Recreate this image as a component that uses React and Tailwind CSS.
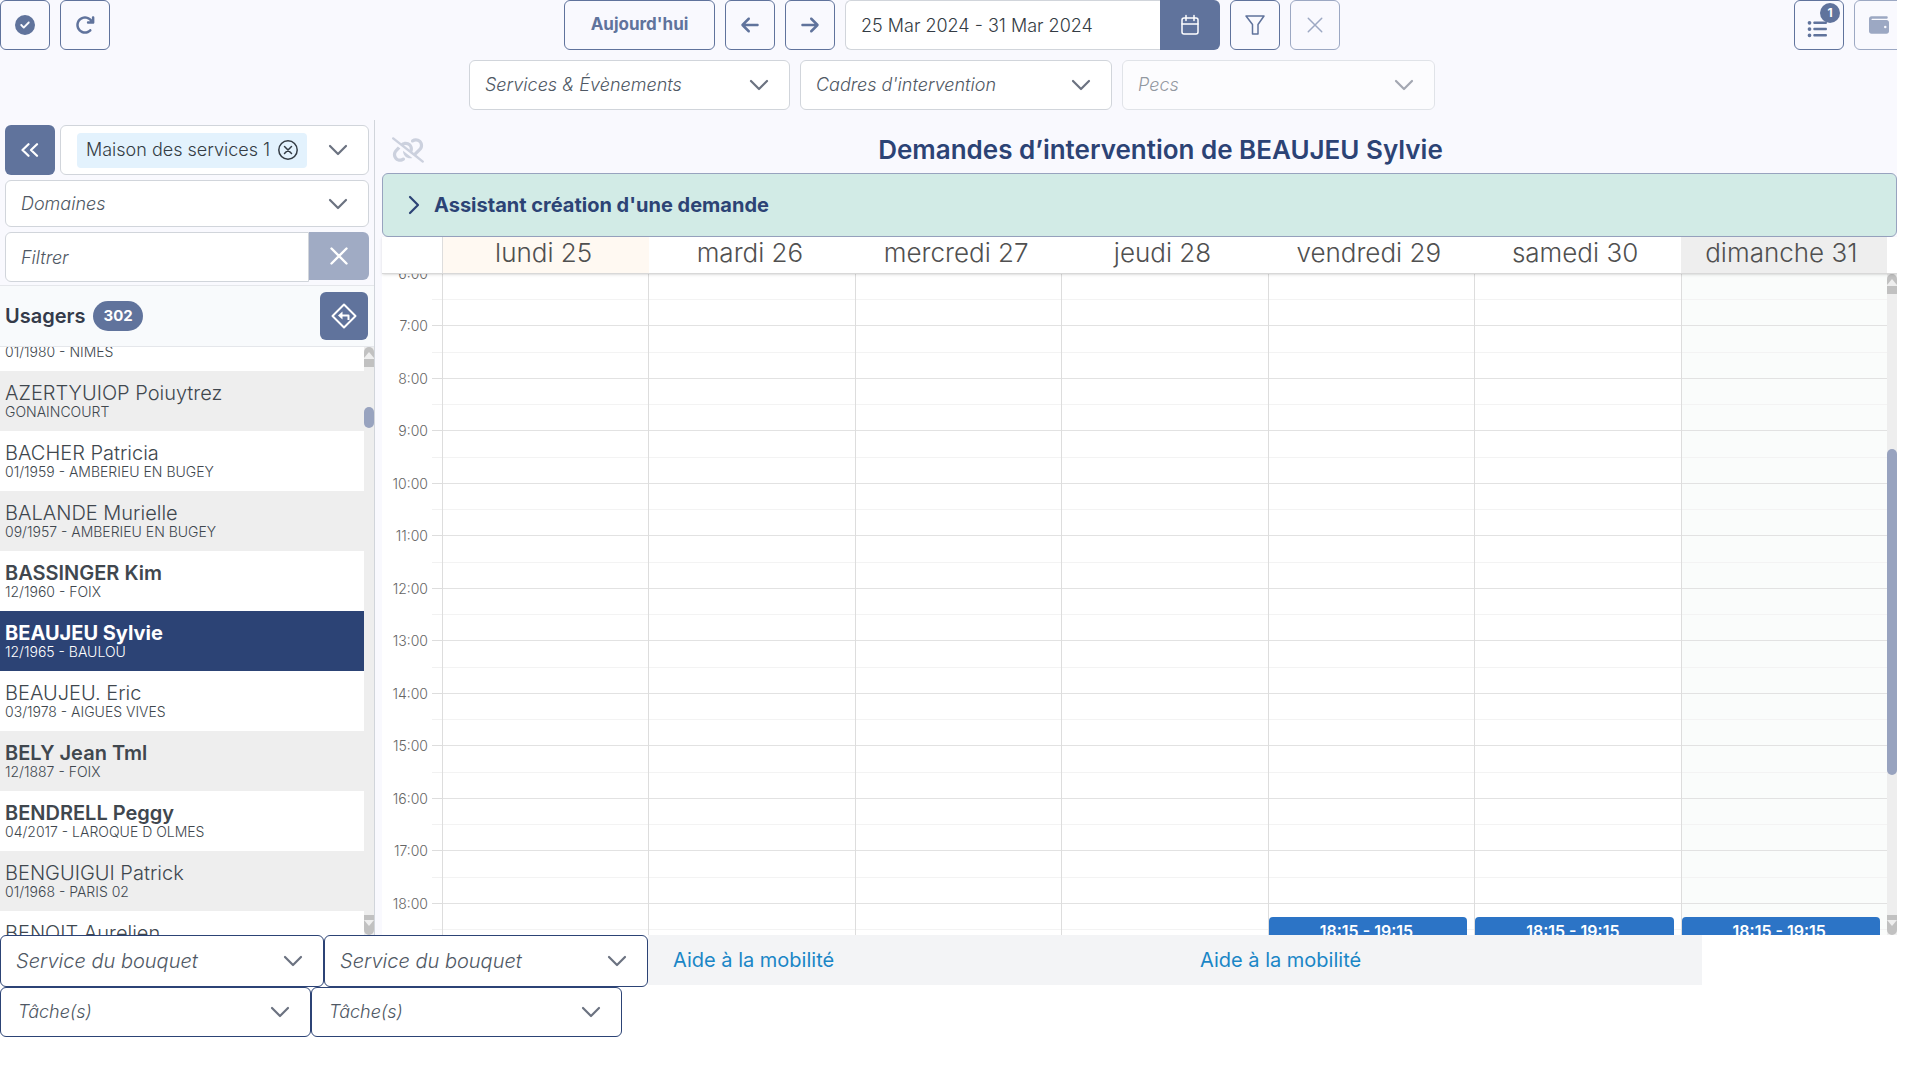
import React from "react";
import {
  FaCircleCheck,
  FaArrowRotateRight,
  FaArrowLeft,
  FaArrowRight,
  FaLinkSlash,
  FaListUl,
  FaWallet,
} from "react-icons/fa6";

const users = [
  { name: "", info: "01/1980 - NIMES" },
  { name: "AZERTYUIOP Poiuytrez", info: "GONAINCOURT" },
  { name: "BACHER Patricia", info: "01/1959 - AMBERIEU EN BUGEY" },
  { name: "BALANDE Murielle", info: "09/1957 - AMBERIEU EN BUGEY" },
  { name: "BASSINGER Kim", info: "12/1960 - FOIX", bold: true },
  { name: "BEAUJEU Sylvie", info: "12/1965 - BAULOU", bold: true, selected: true },
  { name: "BEAUJEU. Eric", info: "03/1978 - AIGUES VIVES" },
  { name: "BELY Jean Tml", info: "12/1887 - FOIX", bold: true },
  { name: "BENDRELL Peggy", info: "04/2017 - LAROQUE D OLMES", bold: true },
  { name: "BENGUIGUI Patrick", info: "01/1968 - PARIS 02" },
  { name: "BENOIT Aurelien", info: "" },
];

const days = [
  { label: "lundi 25", head: "bg-[#fff9f2]" },
  { label: "mardi 26" },
  { label: "mercredi 27" },
  { label: "jeudi 28" },
  { label: "vendredi 29", event: true },
  { label: "samedi 30", event: true },
  { label: "dimanche 31", head: "bg-[#eeeeee]", body: "bg-[#fafcfb]", event: true },
];

const hours = [6, 7, 8, 9, 10, 11, 12, 13, 14, 15, 16, 17, 18];

function Chevron({ className = "" }) {
  return (
    <svg viewBox="0 0 20 20" className={`size-5 ${className}`} fill="none" stroke="currentColor" strokeWidth="2.2" strokeLinecap="round" strokeLinejoin="round">
      <path d="M2 6l8 8 8-8" />
    </svg>
  );
}

function Cross({ className = "", strokeWidth = 1.6 }) {
  return (
    <svg viewBox="0 0 20 20" className={className} fill="none" stroke="currentColor" strokeWidth={strokeWidth} strokeLinecap="round">
      <path d="M2.500 2.500l15 15M17.500 2.500l-15 15" />
    </svg>
  );
}

function IconButton({ label, className = "", children, ...rest }) {
  return (
    <button
      type="button"
      aria-label={label}
      className={`relative flex size-[50px] shrink-0 items-center justify-center rounded-md border border-[#60739c] text-[#60739c] ${className}`}
      {...rest}
    >
      {children}
    </button>
  );
}

function Dropdown({ label, className = "", selectClass = "border-[#d1d5db] px-[15px] text-lg font-light", disabled }) {
  return (
    <div className={`relative flex items-center ${disabled ? "opacity-60" : ""} ${className}`}>
      <select
        aria-label={label}
        disabled={disabled}
        className={`size-full appearance-none rounded-md border bg-white text-[#4f5864] italic ${selectClass}`}
      >
        <option>{label}</option>
      </select>
      <Chevron className="pointer-events-none absolute right-[21px] text-[#6b7280]" />
    </div>
  );
}

function ScrollBar({ thumb }) {
  return (
    <div aria-hidden="true" className="flex w-[10px] shrink-0 flex-col bg-[#eeeeee]">
      <svg viewBox="0 0 10 20" className="h-5 w-[10px] shrink-0">
        <path d="M0 11V5a5 5 0 0 1 10 0v6z" fill="#c1c1c1" />
        <path d="M0 11l5-6 5 6z" fill="#eeeeee" />
        <path d="M0 12h10v8H0z" fill="#c1c1c1" />
      </svg>
      {thumb}
      <svg viewBox="0 0 10 20" className="mt-auto h-5 w-[10px] shrink-0">
        <path d="M0 0h10v5H0z" fill="#c1c1c1" />
        <path d="M0 5v10a5 5 0 0 0 10 0V5z" fill="#c1c1c1" />
        <path d="M0 5l5 6 5-6z" fill="#eeeeee" />
      </svg>
    </div>
  );
}

function Toolbar() {
  return (
    <header className="-mr-[7px] flex flex-col gap-[10px]">
      <div className="flex justify-between">
        <div className="flex gap-[10px]">
          <IconButton label="Valider"><FaCircleCheck className="size-5" /></IconButton>
          <IconButton label="Actualiser"><FaArrowRotateRight className="size-5" /></IconButton>
        </div>
        <div className="flex gap-[10px]">
          <button type="button" className="h-[50px] w-[151px] rounded-md border border-[#60739c] text-[17px] font-bold text-[#60739c]">
            Aujourd'hui
          </button>
          <IconButton label="Semaine précédente"><FaArrowLeft className="size-5" /></IconButton>
          <IconButton label="Semaine suivante"><FaArrowRight className="size-5" /></IconButton>
          <div className="flex">
            <input
              aria-label="Période"
              defaultValue="25 Mar 2024 - 31 Mar 2024"
              className="h-[50px] w-[315px] rounded-l-md border border-r-0 border-[#d1d5db] bg-white px-[15px] text-lg font-light text-[#343c44]"
            />
            <button type="button" aria-label="Ouvrir le calendrier" className="flex h-[50px] w-[60px] items-center justify-center rounded-r-md bg-[#60739c] text-white">
              <svg viewBox="0 0 20 22" className="h-[22px] w-5" fill="none" stroke="currentColor" strokeWidth="1.500" strokeLinecap="round">
                <rect x="2" y="4" width="16" height="16" rx="2" />
                <path d="M2 10h16M6 1.500v5M14 1.500v5" />
              </svg>
            </button>
          </div>
          <IconButton label="Filtrer">
            <svg viewBox="0 0 20 20" className="size-5" fill="none" stroke="currentColor" strokeWidth="1.500" strokeLinejoin="round">
              <path d="M1 1h18l-6 8.500V19H7.500V9.500z" />
            </svg>
          </IconButton>
          <IconButton label="Effacer les filtres" className="opacity-60" disabled><Cross className="size-[18px]" /></IconButton>
        </div>
        <div className="flex gap-[10px]">
          <IconButton label="Liste">
            <FaListUl className="mt-2 mr-1 size-5" />
            <span className="absolute top-[2px] right-[3px] flex size-5 items-center justify-center rounded-full bg-[#60739c] text-xs font-bold text-white">1</span>
          </IconButton>
          <IconButton label="Portefeuille" className="opacity-60" disabled><FaWallet className="size-5" /></IconButton>
        </div>
      </div>
      <div className="flex justify-center gap-[10px]">
        <Dropdown label="Services &amp; Évènements" className="h-[50px] w-[321px]" />
        <Dropdown label="Cadres d'intervention" className="h-[50px] w-[312px]" />
        <Dropdown label="Pecs" className="h-[50px] w-[313px]" disabled />
      </div>
    </header>
  );
}

function Sidebar() {
  return (
    <aside className="flex w-[375px] shrink-0 flex-col border-r border-[#d1d5db]">
      <div className="flex flex-col gap-[5px] p-[5px] pb-[3px]">
        <div className="flex gap-[5px]">
          <button type="button" aria-label="Replier le panneau" className="flex size-[50px] shrink-0 items-center justify-center rounded-md bg-[#60739c] text-white">
            <svg viewBox="0 0 18 14" className="h-[14px] w-[18px]" fill="none" stroke="currentColor" strokeWidth="2.200" strokeLinecap="round" strokeLinejoin="round">
              <path d="M7.500 1.200L1.500 7l6 5.800M16 1.200L10 7l6 5.800" />
            </svg>
          </button>
          <div className="flex h-[50px] flex-1 items-center justify-between rounded-md border border-[#d1d5db] bg-white pr-5 pl-4">
            <span className="flex h-[35px] items-center gap-2 rounded-sm bg-[#e3f2fd] px-[9px] text-lg font-light text-[#343c44]">
              Maison des services 1
              <button type="button" aria-label="Retirer Maison des services 1">
                <svg viewBox="0 0 20 20" className="size-5" fill="none" stroke="currentColor" strokeWidth="1.500" strokeLinecap="round">
                  <circle cx="10" cy="10" r="9.200" />
                  <path d="M6.500 6.500l7 7M13.500 6.500l-7 7" />
                </svg>
              </button>
            </span>
            <button type="button" aria-label="Choisir un service"><Chevron className="block text-[#6b7280]" /></button>
          </div>
        </div>
        <Dropdown label="Domaines" className="h-[47px] w-full" />
        <div className="flex items-start">
          <input
            aria-label="Filtrer"
            placeholder="Filtrer"
            className="h-[50px] min-w-0 flex-1 rounded-l-md border border-[#d1d5db] bg-white px-[15px] text-lg font-light italic placeholder:text-[#4f5864]"
          />
          <button type="button" aria-label="Effacer" className="flex h-12 w-[60px] shrink-0 items-center justify-center rounded-r-md bg-[#a0abc4] text-white">
            <Cross className="size-5" strokeWidth={2.4} />
          </button>
        </div>
      </div>
      <div className="flex h-[62px] shrink-0 items-center border-y border-[#e5e7eb] bg-[#f8fafc] pr-[6px] pl-[5px]">
        <h2 className="text-xl font-semibold text-[#343a4a]">Usagers</h2>
        <span className="ml-2 flex h-[30px] items-center rounded-2xl bg-[#60739c] px-[10px] text-[15px] font-bold text-white">302</span>
        <button type="button" aria-label="Itinéraire" className="ml-auto flex size-12 items-center justify-center rounded-md bg-[#60739c] text-white">
          <svg viewBox="0 0 26 26" className="size-[26px]" fill="none" stroke="currentColor" strokeWidth="2" strokeLinejoin="round">
            <path d="M13 1.500L24.500 13 13 24.500 1.500 13z" />
            <path d="M17.500 17v-4.500H9.500" />
            <path d="M11.500 8.500v8l-4.500-4z" fill="currentColor" stroke="none" />
          </svg>
        </button>
      </div>
      <div className="flex min-h-0 flex-1">
        <div className="min-w-0 flex-1 overflow-hidden bg-white">
          <ul className="-mt-9">
            {users.map((u, i) => (
              <li key={u.name}>
                <button
                  type="button"
                  className={`flex h-[60px] w-full flex-col px-[5px] pt-[10px] text-left ${u.selected ? "bg-[#2c4375] text-white" : i % 2 ? "bg-[#eeeeee] text-[#40474e]" : "bg-white text-[#40474e]"}`}
                >
                  <span className={`h-6 text-xl leading-6 ${u.selected ? "font-bold" : u.bold ? "font-semibold" : "font-light"}`}>{u.name}</span>
                  <span className="text-sm leading-[14px] font-light">{u.info}</span>
                </button>
              </li>
            ))}
          </ul>
        </div>
        <ScrollBar thumb={<div className="mt-10 h-[21px] rounded-full bg-[#98a3bf]" />} />
      </div>
    </aside>
  );
}

function Calendar() {
  return (
    <section className="flex min-w-0 flex-1 flex-col pl-[7px]">
      <div className="flex h-[53px] shrink-0 items-center pt-[6px] pl-[10px]">
        <FaLinkSlash className="h-[26px] w-[32px] text-[#ccd1de]" />
        <h1 className="flex-1 text-center text-[26px] leading-8 font-semibold text-[#2c4375]">Demandes d’intervention de BEAUJEU Sylvie</h1>
      </div>
      <button type="button" className="flex h-16 shrink-0 items-center gap-[13px] rounded-md border border-[#98a3bf] bg-[#d2ebe6] px-6 text-xl font-bold text-[#2c4375]">
        <svg viewBox="0 0 14 20" className="h-5 w-[14px]" fill="none" stroke="currentColor" strokeWidth="2.200" strokeLinecap="round" strokeLinejoin="round">
          <path d="M3 2l8 8-8 8" />
        </svg>
        Assistant création d'une demande
      </button>
      <div className="relative z-10 flex h-[37px] shrink-0 border-b border-[#d8d8d8] bg-white pr-[10px] pl-[60px] shadow-sm">
        {days.map((d, i) => (
          <div key={d.label} className={`flex flex-1 justify-center pr-[5px] text-[26px] leading-8 font-light text-[#505050] ${i === 0 ? "border-l border-[#dddddd]" : ""} ${d.head || ""}`}>
            {d.label}
          </div>
        ))}
      </div>
      <div className="flex min-h-0 flex-1 bg-white">
        <div className="min-w-0 flex-1 overflow-hidden">
          <div className="-mt-px flex">
            <div className="w-[60px] shrink-0">
              {hours.map((h) => (
                <div key={h} className="flex h-[53px] justify-end odd:h-[52px]">
                  <span className="-mt-[9px] mr-1 h-5 text-sm leading-5 font-light text-[#666666]">{h}:00</span>
                  <div className="flex w-[10px] flex-col">
                    <div className="flex-1 border-t border-[#dddddd]" />
                    <div className="flex-1 border-t border-[#f1f1f1]" />
                  </div>
                </div>
              ))}
            </div>
            {days.map((d) => (
              <div key={d.label} className={`relative flex-1 border-l border-[#dddddd] ${d.body || ""}`}>
                {hours.map((h) => (
                  <div key={h} className="flex h-[53px] flex-col odd:h-[52px]">
                    <div className="flex-1 border-t border-[#e2e2e2]" />
                    <div className="flex-1 border-t border-[#f3f3f3]" />
                  </div>
                ))}
                {d.event && (
                  <div className="absolute right-[7px] bottom-0 left-0 h-[38px] rounded-t-sm bg-[#2c74c6] pt-[2px] pr-[3px] text-center text-base leading-6 font-semibold text-white">
                    18:15 - 19:15
                  </div>
                )}
              </div>
            ))}
          </div>
        </div>
        <ScrollBar thumb={<div className="mt-[155px] h-[326px] rounded-full bg-[#98a3bf]" />} />
      </div>
    </section>
  );
}

export default function App() {
  return (
    <div className="min-h-screen bg-white pr-[33px] font-['Inter',sans-serif]">
      <div className="flex h-[935px] flex-col gap-[10px] overflow-hidden bg-[#f9f9fe]">
        <Toolbar />
        <div className="flex min-h-0 flex-1">
          <Sidebar />
          <Calendar />
        </div>
      </div>
      <footer>
        <div className="flex items-start">
          <Dropdown label="Service du bouquet" className="h-[52px] w-[324px]" selectClass="border-[#2c4375] px-[15px] text-xl font-light" />
          <Dropdown label="Service du bouquet" className="h-[52px] w-[324px]" selectClass="border-[#2c4375] px-[15px] text-xl font-light" />
          <nav className="mr-[195px] grid h-[50px] flex-1 grid-cols-2 items-center bg-[#f3f4f6] text-xl font-normal text-[#1a86c6]">
            <a href="#mobilite-1" className="pl-[25px]">Aide à la mobilité</a>
            <a href="#mobilite-2" className="pl-[25px]">Aide à la mobilité</a>
          </nav>
        </div>
        <div className="flex">
          <Dropdown label="Tâche(s)" className="h-[50px] w-[311px]" selectClass="border-[#2c4375] px-[17px] text-lg font-light" />
          <Dropdown label="Tâche(s)" className="h-[50px] w-[311px]" selectClass="border-[#2c4375] px-[17px] text-lg font-light" />
        </div>
      </footer>
    </div>
  );
}
